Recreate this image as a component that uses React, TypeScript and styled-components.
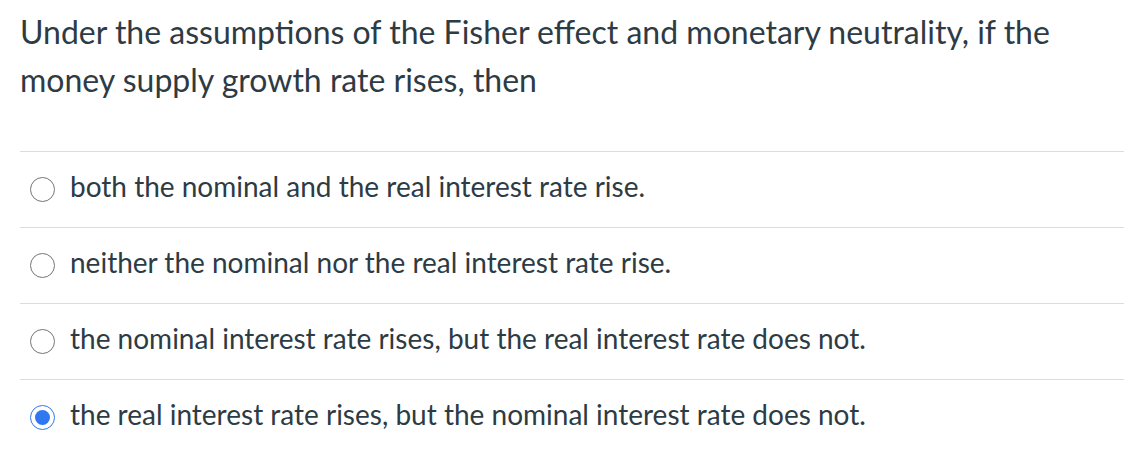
import React, { useState } from 'react';
import styled, { createGlobalStyle } from 'styled-components';

const GlobalStyle = createGlobalStyle`
    html, body {
        margin: 0;
        padding: 0;
        background: #ffffff;
    }
    body {
        font-family: Lato, "Liberation Sans", sans-serif;
        color: #2d3b45;
    }
`

const Question = styled.div`
    padding: 8px 0 0 20px;
`

const Prompt = styled.p`
    margin: 0 30px 47px 0;
    font-size: 32px;
    line-height: 48px;
`

const Answers = styled.div`
    display: flex;
    flex-direction: column;
`

const Answer = styled.label`
    display: flex;
    align-items: center;
    gap: 15px;
    height: 76px;
    padding: 0 0 8px 10px;
    box-sizing: border-box;
    border-top: 1.5px solid #dcdcdc;
    font-size: 28px;
    cursor: pointer;
`

const Radio = styled.span<{ checked: boolean }>`
    flex: none;
    width: 25px;
    height: 25px;
    margin-top: 7px;
    box-sizing: border-box;
    border-radius: 50%;
    border: 1.5px solid ${p => p.checked ? '#2f78f0' : '#757575'};
    display: flex;
    align-items: center;
    justify-content: center;
    &::after {
        content: '';
        display: ${p => p.checked ? 'block' : 'none'};
        width: 15px;
        height: 15px;
        border-radius: 50%;
        background: #2f78f0;
    }
`

const options = [
    'both the nominal and the real interest rate rise.',
    'neither the nominal nor the real interest rate rise.',
    'the nominal interest rate rises, but the real interest rate does not.',
    'the real interest rate rises, but the nominal interest rate does not.',
]

function App() {
    const [selected, setSelected] = useState(3)
    return (
        <>
            <GlobalStyle />
            <Question>
                <Prompt>
                    Under the assumptions of the Fisher effect and monetary neutrality, if the money supply growth rate rises, then
                </Prompt>
                <Answers>
                    {options.map((text, i) =>
                        <Answer key={i} onClick={() => setSelected(i)}>
                            <Radio checked={selected === i} />
                            {text}
                        </Answer>)}
                </Answers>
            </Question>
        </>
    )
}

export default App
